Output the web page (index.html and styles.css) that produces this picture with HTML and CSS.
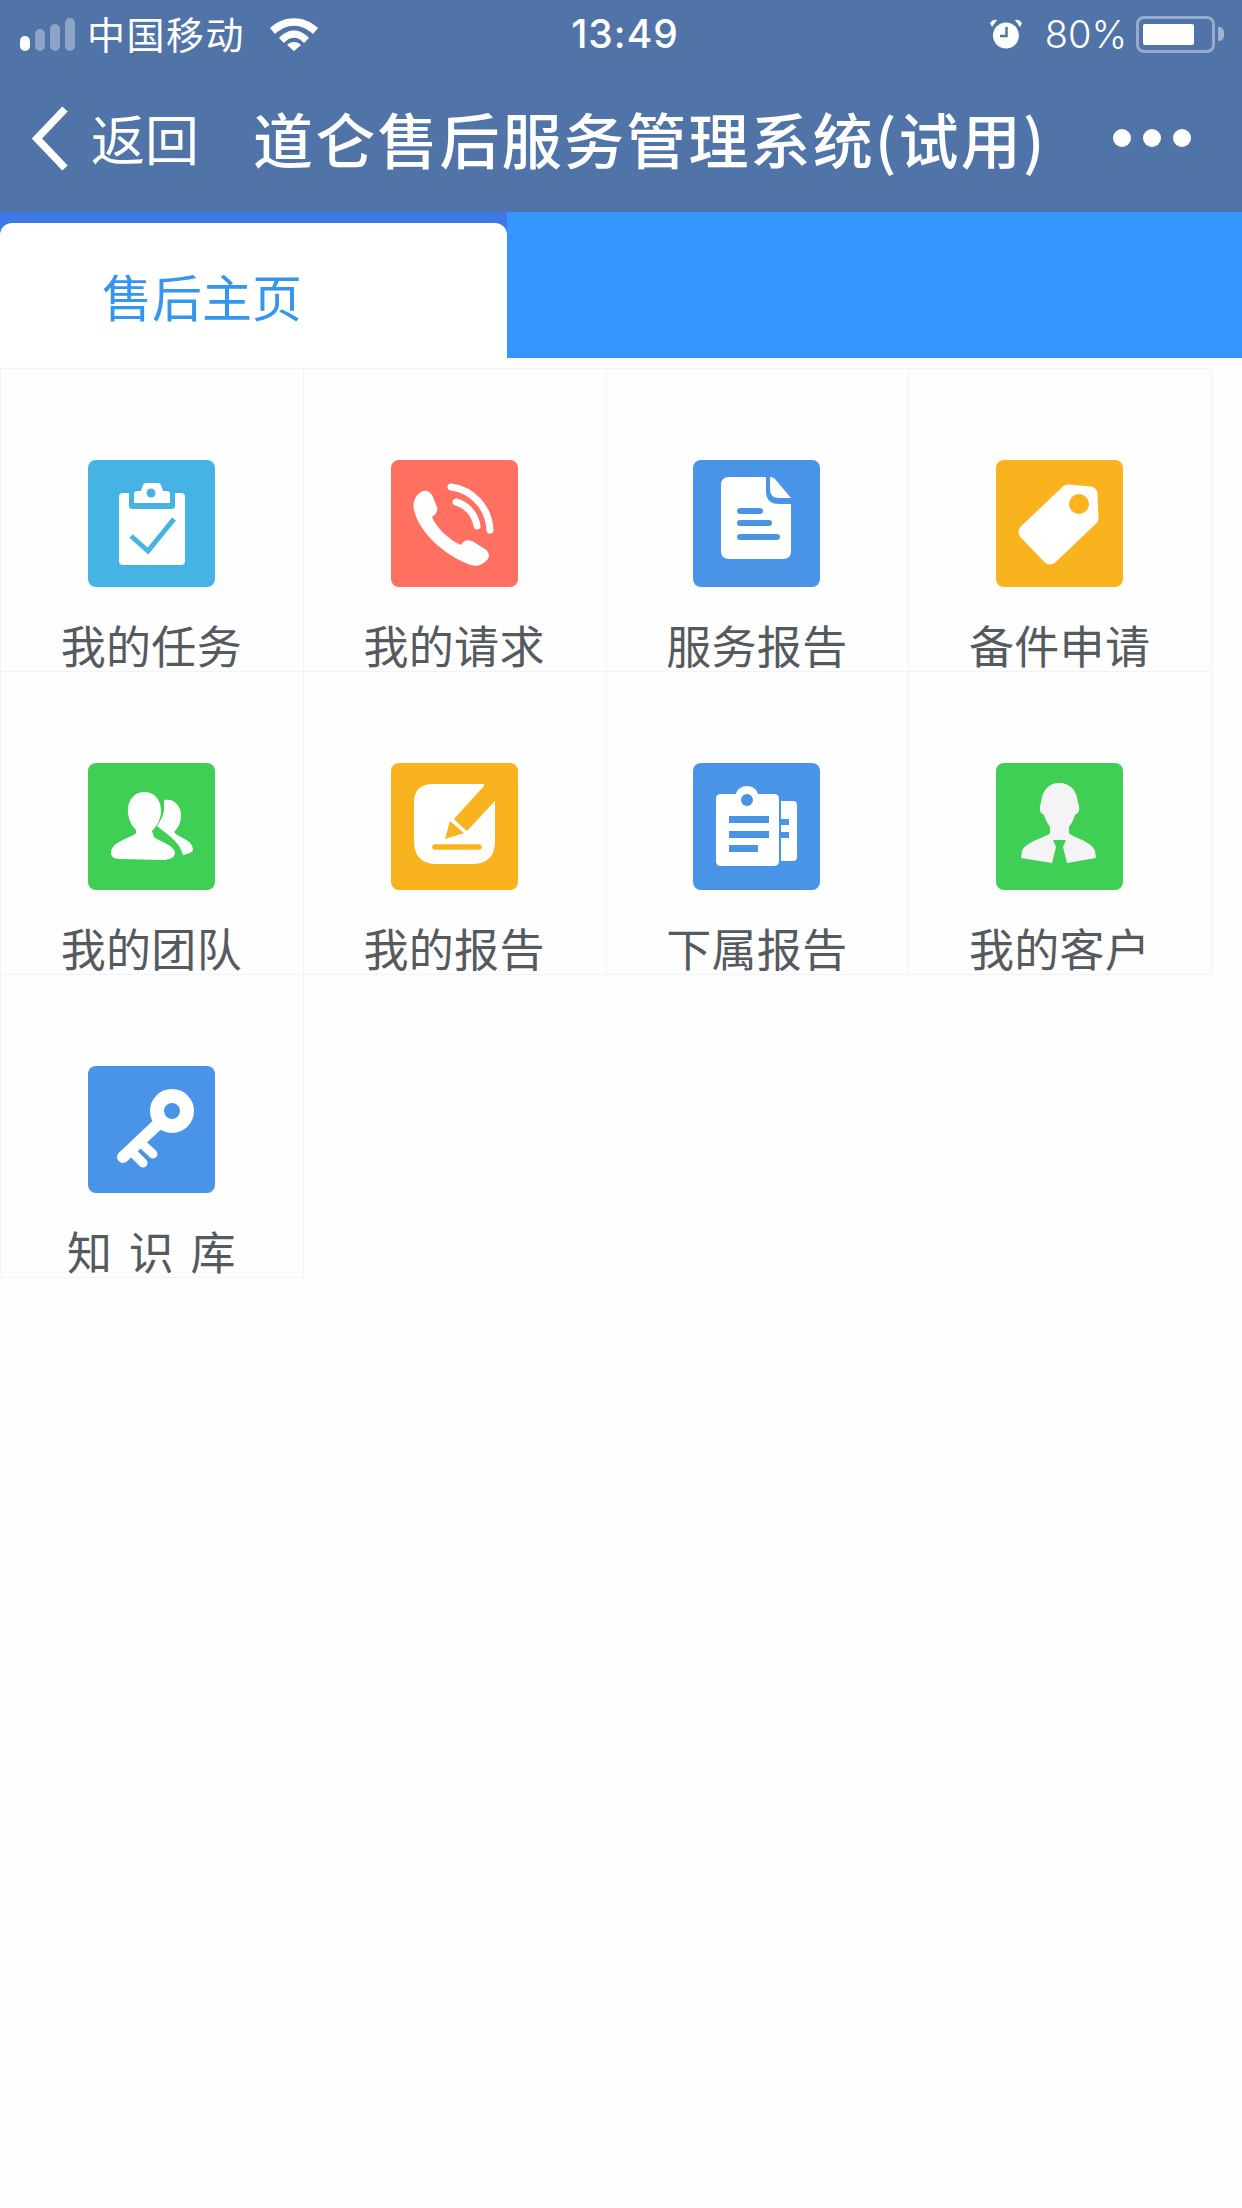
FILE: index.html
```html
<!DOCTYPE html>
<html lang="zh-CN">
<head>
<meta charset="utf-8">
<title>道仑售后服务管理系统</title>
<link rel="stylesheet" href="styles.css">
</head>
<body>
<header class="topbar">
  <div class="status">
    <div class="status-left">
      <div class="signal"><i class="bar b1"></i><i class="bar b2"></i><i class="bar b3"></i><i class="bar b4"></i></div>
      <span class="carrier">中国移动</span>
      <svg class="wifi" viewBox="0 0 48 33"><path d="M0 10 C14 -3 34 -3 48 10 L43 16 C31 5 17 5 5 16 Z M9 20 C18 10 30 10 39 20 L34 25 C28 18 20 18 14 25 Z M17 27 C21 23 27 23 31 27 L24 33 Z" fill="#fff"/></svg>
    </div>
    <div class="time">13:49</div>
    <div class="status-right">
      <svg class="alarm" viewBox="0 0 34 30"><circle cx="17" cy="16.500" r="13" fill="#fff"/><path d="M3 8 L1 4 Q4 0 8 1 Z M31 8 L33 4 Q30 0 26 1 Z" fill="#fff"/><path d="M17.500 8 V17 H11" stroke="#5074a8" stroke-width="2.500" fill="none"/></svg>
      <span class="percent">80%</span>
      <div class="battery"><div class="battery-body"><div class="battery-fill"></div></div><div class="battery-tip"></div></div>
    </div>
  </div>
  <nav class="navrow">
    <svg class="chevron" viewBox="0 0 37 65"><path d="M33 3 L5 32.500 L33 62" fill="none" stroke="#fff" stroke-width="7.500"/></svg>
    <span class="back">返回</span>
    <h1 class="title">道仑售后服务管理系统(试用)</h1>
    <div class="dots"><i class="dot"></i><i class="dot"></i><i class="dot"></i></div>
  </nav>
</header>

<section class="tabs">
  <div class="tab-slot"><div class="tab">售后主页</div></div>
</section>

<main class="grid">
  <a class="cell">
    <svg class="icon" viewBox="0 0 127 127"><rect width="127" height="127" rx="8" fill="#45b3e3"/><rect x="31" y="33" width="66" height="72" rx="4" fill="#fff"/><path d="M41 28 H87 V46 Q87 49 84 49 H44 Q41 49 41 46 Z" fill="#45b3e3"/><path d="M46 43 V34 Q46 31 49 31 H53 L55 25 Q56 23 58 23 H70 Q72 23 73 25 L75 31 H79 Q82 31 82 34 V43 Z" fill="#fff"/><circle cx="63" cy="33" r="4.500" fill="#45b3e3"/><path d="M43 76 L60 91 L86 59" fill="none" stroke="#45b3e3" stroke-width="5"/></svg>
    <span class="label">我的任务</span>
  </a>
  <a class="cell">
    <svg class="icon" viewBox="0 0 127 127"><rect width="127" height="127" rx="8" fill="#ff7060"/><path d="M30 32 C35 29 40 32 42 37 L46 47 C47 51 45 54 41 57 C45 67 58 80 70 85 C72 81 76 79 81 81 L94 89 C99 92 99 98 95 101 C90 106 84 107 77 104 C52 94 28 72 23 50 C21 42 25 35 30 32 Z" fill="#fff"/><path d="M60 27 C82 30 98 48 99 70 M65 42 C76 45 84 54 86 66" fill="none" stroke="#fff" stroke-width="7" stroke-linecap="round"/></svg>
    <span class="label">我的请求</span>
  </a>
  <a class="cell">
    <svg class="icon" viewBox="0 0 127 127"><rect width="127" height="127" rx="8" fill="#4a94e8"/><path d="M36 17 H73 V31 Q73 44 86 44 H98 V91 Q98 99 90 99 H36 Q28 99 28 91 V25 Q28 17 36 17 Z" fill="#fff"/><path d="M77 17 Q80 17 82 19 L98 38 H86 Q77 38 77 29 Z" fill="#fff"/><path d="M47 51 H67 M47 63 H76 M47 77 H84" stroke="#4a94e8" stroke-width="6" stroke-linecap="round"/></svg>
    <span class="label">服务报告</span>
  </a>
  <a class="cell">
    <svg class="icon" viewBox="0 0 127 127"><rect width="127" height="127" rx="8" fill="#f9b31f"/><path d="M72 32 L94 34 L95 58 L54 97 L30 72 Z" fill="#fff" stroke="#fff" stroke-width="15" stroke-linejoin="round"/><circle cx="83" cy="44" r="10" fill="#f9b31f"/></svg>
    <span class="label">备件申请</span>
  </a>
  <a class="cell">
    <svg class="icon" viewBox="0 0 127 127"><rect width="127" height="127" rx="8" fill="#3fcf55"/><path d="M56 29 C46 29 39 38 40 50 C41 58 44 63 48 67 L48 70 C44 75 23 78 23 90 C23 95 28 96 33 96 L75 97 C80 97 87 95 87 90 C87 82 70 78 66 74 L64 68 C68 64 73 57 73 48 C73 36 66 29 56 29 Z" fill="#fff"/><path d="M76 37 C87 35 93 44 93 52 C93 60 90 65 86 69 C90 75 105 76 105 87 C105 89 100 91 95 92 C92 80 83 74 69 63 C72 58 75 54 76 47 C76 43 76 40 76 37 Z" fill="#fff"/></svg>
    <span class="label">我的团队</span>
  </a>
  <a class="cell">
    <svg class="icon" viewBox="0 0 127 127"><rect width="127" height="127" rx="8" fill="#f9b31f"/><path d="M42 21 H94 L104 39 V78 Q104 101 81 101 H46 Q23 101 23 78 V40 Q23 21 42 21 Z" fill="#fff"/><path d="M93 23 L62 57 L76 68 L104 38 V21 H93 Z" fill="#f9b31f"/><path d="M93 21 H106 V36 Z" fill="#f9b31f"/><path d="M59 58 L73 70 L54 76 Z" fill="#f9b31f"/><path d="M60 55 L76 71" stroke="#fff" stroke-width="3"/><path d="M44 84 H88" stroke="#f9b31f" stroke-width="5.500" stroke-linecap="round"/></svg>
    <span class="label">我的报告</span>
  </a>
  <a class="cell">
    <svg class="icon" viewBox="0 0 127 127"><rect width="127" height="127" rx="8" fill="#4a94e8"/><path d="M88 38 H100 Q104 38 104 42 V94 Q104 98 100 98 H88 Z" fill="#fff"/><path d="M88 56 H96 V62 H88 Z M88 69 H96 V75 H88 Z" fill="#4a94e8"/><path d="M28 31 H43 C44 26 49 23 54 23 C59 23 64 26 65 31 H81 Q86 31 86 36 V98 Q86 103 81 103 H28 Q23 103 23 98 V36 Q23 31 28 31 Z" fill="#fff"/><circle cx="54" cy="37" r="6" fill="#4a94e8"/><path d="M36 53 H76 V60 H36 Z M36 68 H76 V75 H36 Z M36 82 H65 V89 H36 Z" fill="#4a94e8"/></svg>
    <span class="label">下属报告</span>
  </a>
  <a class="cell">
    <svg class="icon" viewBox="0 0 127 127"><rect width="127" height="127" rx="8" fill="#3fcf55"/><path d="M63 20 C52 20 46 28 45 40 C43 44 43 50 48 52 C50 58 52 61 54 64 V70 C52 74 30 78 26 88 L25 95 L56 100 H71 L100 95 L99 88 C96 78 75 74 73 70 V64 C75 61 77 58 79 52 C84 50 84 44 82 40 C81 28 75 20 63 20 Z" fill="#f4f4f6"/><path d="M57 77 H70 L67 84 L71 100 H56 L60 84 Z" fill="#3fcf55"/></svg>
    <span class="label">我的客户</span>
  </a>
  <a class="cell">
    <svg class="icon" viewBox="0 0 127 127"><rect width="127" height="127" rx="8" fill="#4a94e8"/><path d="M70 58 L35 91" fill="none" stroke="#fff" stroke-width="12" stroke-linecap="round"/><path d="M52 76 L65 88 M43 85 L55 97" fill="none" stroke="#fff" stroke-width="9" stroke-linecap="round"/><circle cx="84" cy="45" r="15" fill="none" stroke="#fff" stroke-width="14"/></svg>
    <span class="label label-spaced">知 识 库</span>
  </a>
</main>
</body>
</html>
```
FILE: styles.css
```css
* { box-sizing: border-box; }

html, body {
  margin: 0;
  padding: 0;
  background: #fefefe;
}

body {
  width: 1242px;
  height: 2208px;
  overflow: hidden;
  font-family: "Noto Sans CJK SC", "Liberation Sans", sans-serif;
}

.topbar {
  height: 212px;
  background: #5074a8;
  color: #fff;
}

.status {
  height: 68px;
  display: grid;
  grid-template-columns: 1fr auto 1fr;
  align-items: center;
  padding: 0 18px 0 20px;
}

.status-left,
.status-right {
  display: flex;
  align-items: center;
}

.status-right { justify-content: flex-end; }

.signal {
  display: flex;
  align-items: flex-end;
  gap: 5px;
  height: 33px;
  margin-right: 12px;
}

.bar {
  display: block;
  width: 10px;
  border-radius: 5px;
  background: rgba(255, 255, 255, 0.35);
}

.b1 { height: 15px; background: #fff; }
.b2 { height: 22px; }
.b3 { height: 27px; }
.b4 { height: 33px; }

.carrier {
  font-size: 38px;
  line-height: 40px;
  width: 159px;
  letter-spacing: 1.500px;
  font-weight: 400;
  margin-top: -2px;
  white-space: nowrap;
}

.wifi {
  width: 48px;
  height: 33px;
  margin-left: 24px;
}

.time {
  font-family: Inter, "Liberation Sans", sans-serif;
  font-size: 39px;
  line-height: 40px;
  font-weight: 500;
  letter-spacing: 1px;
  margin-left: 6px;
}

.alarm {
  width: 34px;
  height: 30px;
  margin-right: 22px;
}

.percent {
  font-family: Inter, "Liberation Sans", sans-serif;
  font-size: 38px;
  line-height: 40px;
  font-weight: 300;
  margin-right: 9px;
}

.battery {
  display: flex;
  align-items: center;
}

.battery-body {
  width: 79px;
  height: 37px;
  padding: 5px 18px 5px 4px;
  border: 3px solid rgba(255, 255, 255, 0.4);
  border-radius: 8px;
}

.battery-fill {
  height: 100%;
  border-radius: 2px;
  background: #fff;
}

.battery-tip {
  width: 6px;
  height: 14px;
  margin-left: 3px;
  border-radius: 0 5px 5px 0;
  background: rgba(255, 255, 255, 0.45);
}

.navrow {
  height: 144px;
  display: flex;
  align-items: center;
  padding: 0 0 4px 32px;
}

.chevron {
  width: 37px;
  height: 65px;
  flex: none;
}

.back {
  font-size: 54px;
  line-height: 60px;
  margin-left: 22px;
  font-weight: 400;
}

.title {
  margin: 0 0 0 54px;
  font-size: 60px;
  line-height: 70px;
  font-weight: 500;
  letter-spacing: 2.200px;
  white-space: nowrap;
}

.dots {
  display: flex;
  gap: 12px;
  margin-left: 66px;
}

.dot {
  display: block;
  width: 18px;
  height: 18px;
  border-radius: 50%;
  background: #fff;
}

.tabs {
  height: 146px;
  background: #3596ff;
}

.tab-slot {
  width: 507px;
  height: 100%;
  padding-top: 11px;
  background: #3d78e6;
}

.tab {
  height: 100%;
  display: flex;
  align-items: center;
  padding: 8px 0 0 102px;
  background: #fff;
  border-radius: 12px 12px 0 0;
  color: #3596f0;
  font-size: 50px;
  line-height: 60px;
  font-weight: 400;
}

.grid {
  display: grid;
  grid-template-columns: repeat(4, 302.750px);
  grid-auto-rows: 303px;
  margin-top: 10px;
}

.cell {
  display: flex;
  flex-direction: column;
  align-items: center;
  padding-top: 92px;
  box-shadow: inset 1px 1px 0 #f3f2f6, 1px 1px 0 #f3f2f6;
}

.icon {
  display: block;
  width: 127px;
  height: 127px;
  flex: none;
}

.label {
  margin-top: 35px;
  color: #555a5f;
  font-size: 45px;
  line-height: 45px;
  font-weight: 400;
  letter-spacing: 0.300px;
  white-space: nowrap;
}

.label-spaced {
  word-spacing: 6px;
}
```
